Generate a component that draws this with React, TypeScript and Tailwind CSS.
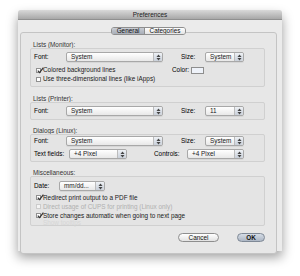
import React from 'react';

const font = { fontFamily: '"Liberation Sans", Arial, sans-serif' };

function Arrows() {
  return (
    <svg width="5" height="7" viewBox="0 0 5 7" className="block">
      <path d="M2.5 0.5 L4.5 3 L0.5 3 Z" fill="#444" />
      <path d="M0.5 4 L4.5 4 L2.5 6.5 Z" fill="#444" />
    </svg>
  );
}

function Popup({ value, width }: { value: string; width: string }) {
  return (
    <div
      className={`${width} h-[10px] flex items-stretch rounded-[2px] border border-[#a8a8a8] bg-gradient-to-b from-white to-[#e8e8e8] shadow-[0_1px_0_rgba(0,0,0,0.06)]`}
    >
      <div className="flex-1 pl-[4px] leading-[8px] text-[#1a1a1a] truncate">{value}</div>
      <div className="w-[9px] flex items-center justify-center border-l border-[#bcbcbc] bg-gradient-to-b from-[#eef1f5] to-[#c9d0da] rounded-r-[2px]">
        <Arrows />
      </div>
    </div>
  );
}

function Check({ checked, label, disabled }: { checked?: boolean; label: string; disabled?: boolean }) {
  return (
    <div className="flex items-center gap-[2px] pl-[2px]">
      <div
        className={`w-[5px] h-[5px] border ${disabled ? 'border-[#cccccc] bg-[#f4f4f4]' : 'border-[#909090] bg-white'} relative`}
      >
        {checked && (
          <svg width="7" height="7" viewBox="0 0 7 7" className="absolute -top-[2px] left-0">
            <path d="M0.8 3.6 L2.6 5.6 L6.4 0.6" stroke="#333" strokeWidth="1.2" fill="none" />
          </svg>
        )}
      </div>
      <span className={disabled ? 'text-[#b0b0b0]' : 'text-[#1a1a1a]'}>{label}</span>
    </div>
  );
}

function Section({ title, children, className }: { title: string; children: React.ReactNode; className: string }) {
  return (
    <div className="flex flex-col">
      <div className="h-[7px] leading-[7px] pl-[3px] text-[#333]">{title}</div>
      <div className={`border border-[#d0d0d0] rounded-[2px] bg-[#e4e4e4] pl-[2px] ${className}`}>{children}</div>
    </div>
  );
}

export default function App() {
  return (
    <div className="w-[300px] h-[276px] bg-white pt-[10px] pl-[18px] text-[6.4px]" style={font}>
      <div className="w-[264px] h-[241px] flex flex-col bg-[#ebebeb] shadow-[0_6px_12px_rgba(0,0,0,0.4)] rounded-t-[3px]">
        <div className="h-[10px] leading-[10px] text-center text-[#222] bg-gradient-to-b from-[#d9d9d9] to-[#a8a8a8] rounded-t-[3px] border-b border-[#909090]">
          Preferences
        </div>
        <div className="flex-1 flex flex-col pt-[7px] pl-[2px] pr-[5px]">
          <div className="flex justify-center relative z-10 h-[8px]">
            <div className="flex rounded-[3px] border border-[#8e8e8e] overflow-hidden leading-[6px]">
              <div className="w-[33px] text-center bg-gradient-to-b from-[#c8ccd3] to-[#a8aeb8] text-[#111] border-r border-[#8e8e8e]">
                General
              </div>
              <div className="w-[40px] text-center bg-gradient-to-b from-white to-[#e4e4e4] text-[#111]">Categories</div>
            </div>
          </div>
          <div className="-mt-[3px] h-[222px] border border-[#c4c4c4] rounded-[3px] bg-[#e7e7e7] pt-[8px] pl-[9px] pr-[11px] flex flex-col">
            <Section title="Lists (Monitor):" className="h-[39px] pt-[3px]">
              <div className="flex items-center h-[10px] pl-[1px]">
                <span className="w-[32px]">Font:</span>
                <Popup value="System" width="w-[97px]" />
                <span className="w-[24px] ml-[18px]">Size:</span>
                <Popup value="System" width="w-[39px]" />
              </div>
              <div className="flex items-center h-[8px] mt-[4px] pl-[1px]">
                <div className="w-[138px]">
                  <Check checked label="Colored background lines" />
                </div>
                <span className="w-[19px]">Color:</span>
                <div className="w-[13px] h-[7px] border border-[#8e8e8e] bg-[#eef2f9]" />
              </div>
              <div className="flex items-center h-[8px] mt-[1px] pl-[1px]">
                <Check label="Use three-dimensional lines (like iApps)" />
              </div>
            </Section>
            <div className="h-[8px]" />
            <Section title="Lists (Printer):" className="h-[18px] pt-[3px]">
              <div className="flex items-center h-[10px] pl-[1px]">
                <span className="w-[32px]">Font:</span>
                <Popup value="System" width="w-[97px]" />
                <span className="w-[24px] ml-[18px]">Size:</span>
                <Popup value="11" width="w-[39px]" />
              </div>
            </Section>
            <div className="h-[7px]" />
            <Section title="Dialogs (Linux):" className="h-[28px] pt-[1px]">
              <div className="flex items-center h-[10px] pl-[1px]">
                <span className="w-[32px]">Font:</span>
                <Popup value="System" width="w-[97px]" />
                <span className="w-[24px] ml-[18px]">Size:</span>
                <Popup value="System" width="w-[39px]" />
              </div>
              <div className="flex items-center h-[10px] mt-[3px] pl-[1px]">
                <span className="w-[35px]">Text fields:</span>
                <Popup value="+4 Pixel" width="w-[58px]" />
                <span className="w-[33px] ml-[27px]">Controls:</span>
                <Popup value="+4 Pixel" width="w-[57px]" />
              </div>
            </Section>
            <div className="h-[7px]" />
            <Section title="Miscellaneous:" className="h-[50px] pt-[4px]">
              <div className="flex items-center h-[10px] pl-[1px]">
                <span className="w-[25px]">Date:</span>
                <Popup value="mm/dd..." width="w-[46px]" />
              </div>
              <div className="flex flex-col mt-[2px] pl-[1px] leading-[9px]">
                <Check checked label="Redirect print output to a PDF file" />
                <Check disabled label="Direct usage of CUPS for printing (Linux only)" />
                <Check checked label="Store changes automatic when going to next page" />
                <div className="pl-[9px] leading-[6px] text-[#d6d6d6]">Show tooltips</div>
              </div>
            </Section>
            <div className="flex justify-end items-center gap-[18px] mt-[7px]">
              <div className="w-[41px] h-[9px] leading-[7px] text-center rounded-full border border-[#8e8e8e] bg-gradient-to-b from-white to-[#e2e2e2] text-[#111]">
                Cancel
              </div>
              <div className="w-[28px] h-[9px] leading-[7px] text-center rounded-full border border-[#7f8996] bg-gradient-to-b from-[#d5dce6] to-[#acb6c4] font-bold text-[#111]">
                OK
              </div>
            </div>
          </div>
        </div>
      </div>
    </div>
  );
}
